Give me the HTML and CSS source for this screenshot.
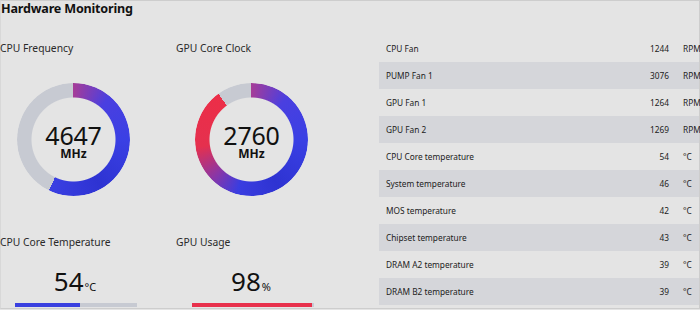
FILE: index.html
```html
<!DOCTYPE html>
<html>
<head>
<meta charset="utf-8">
<link rel="stylesheet" href="styles.css">
</head>
<body>
<div class="frame">
  <h1 class="title">Hardware Monitoring</h1>
  <div class="content">
    <div class="left">
      <div class="cell">
        <div class="label">CPU Frequency</div>
        <div class="gauge gauge-cpu">
          <div class="gauge-text"><span class="gnum">4647</span><span class="gunit">MHz</span></div>
        </div>
      </div>
      <div class="cell">
        <div class="label">GPU Core Clock</div>
        <div class="gauge gauge-gpu">
          <div class="gauge-text"><span class="gnum">2760</span><span class="gunit">MHz</span></div>
        </div>
      </div>
      <div class="cell cell-small">
        <div class="label">CPU Core Temperature</div>
        <div class="big"><span class="bnum">54</span><span class="bunit">°C</span></div>
        <div class="bar"><div class="fill fill-blue" style="width:53%"></div></div>
      </div>
      <div class="cell cell-small">
        <div class="label">GPU Usage</div>
        <div class="big"><span class="bnum">98</span><span class="bunit">%</span></div>
        <div class="bar"><div class="fill fill-red" style="width:98%"></div></div>
      </div>
    </div>
    <div class="table">
      <div class="row"><span class="name">CPU Fan</span><span class="val">1244</span><span class="unit">RPM</span></div>
      <div class="row alt"><span class="name">PUMP Fan 1</span><span class="val">3076</span><span class="unit">RPM</span></div>
      <div class="row"><span class="name">GPU Fan 1</span><span class="val">1264</span><span class="unit">RPM</span></div>
      <div class="row alt"><span class="name">GPU Fan 2</span><span class="val">1269</span><span class="unit">RPM</span></div>
      <div class="row"><span class="name">CPU Core temperature</span><span class="val">54</span><span class="unit">°C</span></div>
      <div class="row alt"><span class="name">System temperature</span><span class="val">46</span><span class="unit">°C</span></div>
      <div class="row"><span class="name">MOS temperature</span><span class="val">42</span><span class="unit">°C</span></div>
      <div class="row alt"><span class="name">Chipset temperature</span><span class="val">43</span><span class="unit">°C</span></div>
      <div class="row"><span class="name">DRAM A2 temperature</span><span class="val">39</span><span class="unit">°C</span></div>
      <div class="row alt"><span class="name">DRAM B2 temperature</span><span class="val">39</span><span class="unit">°C</span></div>
    </div>
  </div>
</div>
</body>
</html>
```

FILE: styles.css
```css
html, body {
  margin: 0;
  padding: 0;
  background: #e4e4e4;
}
body {
  font-family: "Noto Sans", "Open Sans", sans-serif;
  color: #2b2b2b;
  width: 700px;
  height: 310px;
  overflow: hidden;
}
.frame {
  box-sizing: border-box;
  width: 700px;
  height: 309px;
  border: 1px solid #cdcdcd;
  border-left-color: #d8d8d8;
  position: relative;
}
.title {
  margin: 0;
  position: absolute;
  left: 0;
  top: 0;
  font-size: 12.6px;
  font-weight: 700;
  line-height: 16px;
  color: #111;
  background: #e4e4e4;
  letter-spacing: -0.2px;
}
.content {
  display: flex;
  padding-top: 33px;
}
.left {
  width: 379px;
  display: grid;
  grid-template-columns: 176px 150px;
  grid-template-rows: 193px 80px;
  margin-left: -1px;
}
.cell {
  display: flex;
  flex-direction: column;
  width: 150px;
}
.label {
  font-size: 10.3px;
  line-height: 26px;
  height: 26px;
  color: #2a2a2a;
  margin-top: 1px;
}
.gauge {
  width: 113px;
  height: 113px;
  border-radius: 50%;
  margin: 22px 0 0 17px;
  position: relative;
}
.gauge::before {
  content: "";
  position: absolute;
  inset: 0;
  border-radius: 50%;
  -webkit-mask: radial-gradient(circle, transparent 41.5px, #000 42.5px);
  mask: radial-gradient(circle, transparent 41.5px, #000 42.5px);
}
.gauge-cpu::before {
  background: conic-gradient(#a53c98 0deg, #4a3fe0 40deg, #3a40e4 90deg, #2e33d2 150deg, #3a3fe2 206deg, #c7cad2 206deg 360deg);
}
.gauge-gpu::before {
  background: conic-gradient(#a53c98 0deg, #4a3fe0 40deg, #3a40e4 90deg, #2e33d2 150deg, #3a3de0 195deg, #8a36a6 225deg, #e5304e 262deg, #ec2e48 324deg, #c7cad2 324deg 360deg);
}
.cell:nth-child(2) .gauge {
  margin-left: 19px;
}
.gauge-text {
  position: absolute;
  inset: 0;
  display: flex;
  flex-direction: column;
  align-items: center;
  justify-content: center;
  padding-top: 4px;
  box-sizing: border-box;
}
.gnum {
  font-size: 25px;
  line-height: 24px;
  color: #111;
  letter-spacing: -0.2px;
}
.gunit {
  font-size: 12px;
  font-weight: 700;
  line-height: 14px;
  color: #111;
}
.cell-small .label {
  margin-top: 2px;
}
.big {
  width: 150px;
  text-align: center;
  margin-top: 12px;
  height: 28px;
  line-height: 28px;
  color: #111;
}
.bnum {
  font-size: 26px;
}
.bunit {
  font-size: 11px;
  margin-left: 1px;
}
.bar {
  width: 122px;
  height: 5px;
  background: #c7cad2;
  margin: 8px 0 0 15px;
}
.cell:nth-child(4) .bar {
  margin-left: 16px;
}
.fill {
  height: 100%;
}
.fill-blue {
  background: #3a40e0;
}
.fill-red {
  background: #e8304c;
}
.table {
  flex: 1;
  padding-top: 1px;
}
.row {
  display: flex;
  align-items: center;
  height: 27px;
  font-size: 8.3px;
  color: #222;
  padding-left: 7px;
}
.row.alt {
  background: #d5d6da;
}
.name {
  flex: 1;
}
.val {
  width: 40px;
  text-align: right;
}
.unit {
  width: 16px;
  margin-left: 14px;
  white-space: nowrap;
}
```
